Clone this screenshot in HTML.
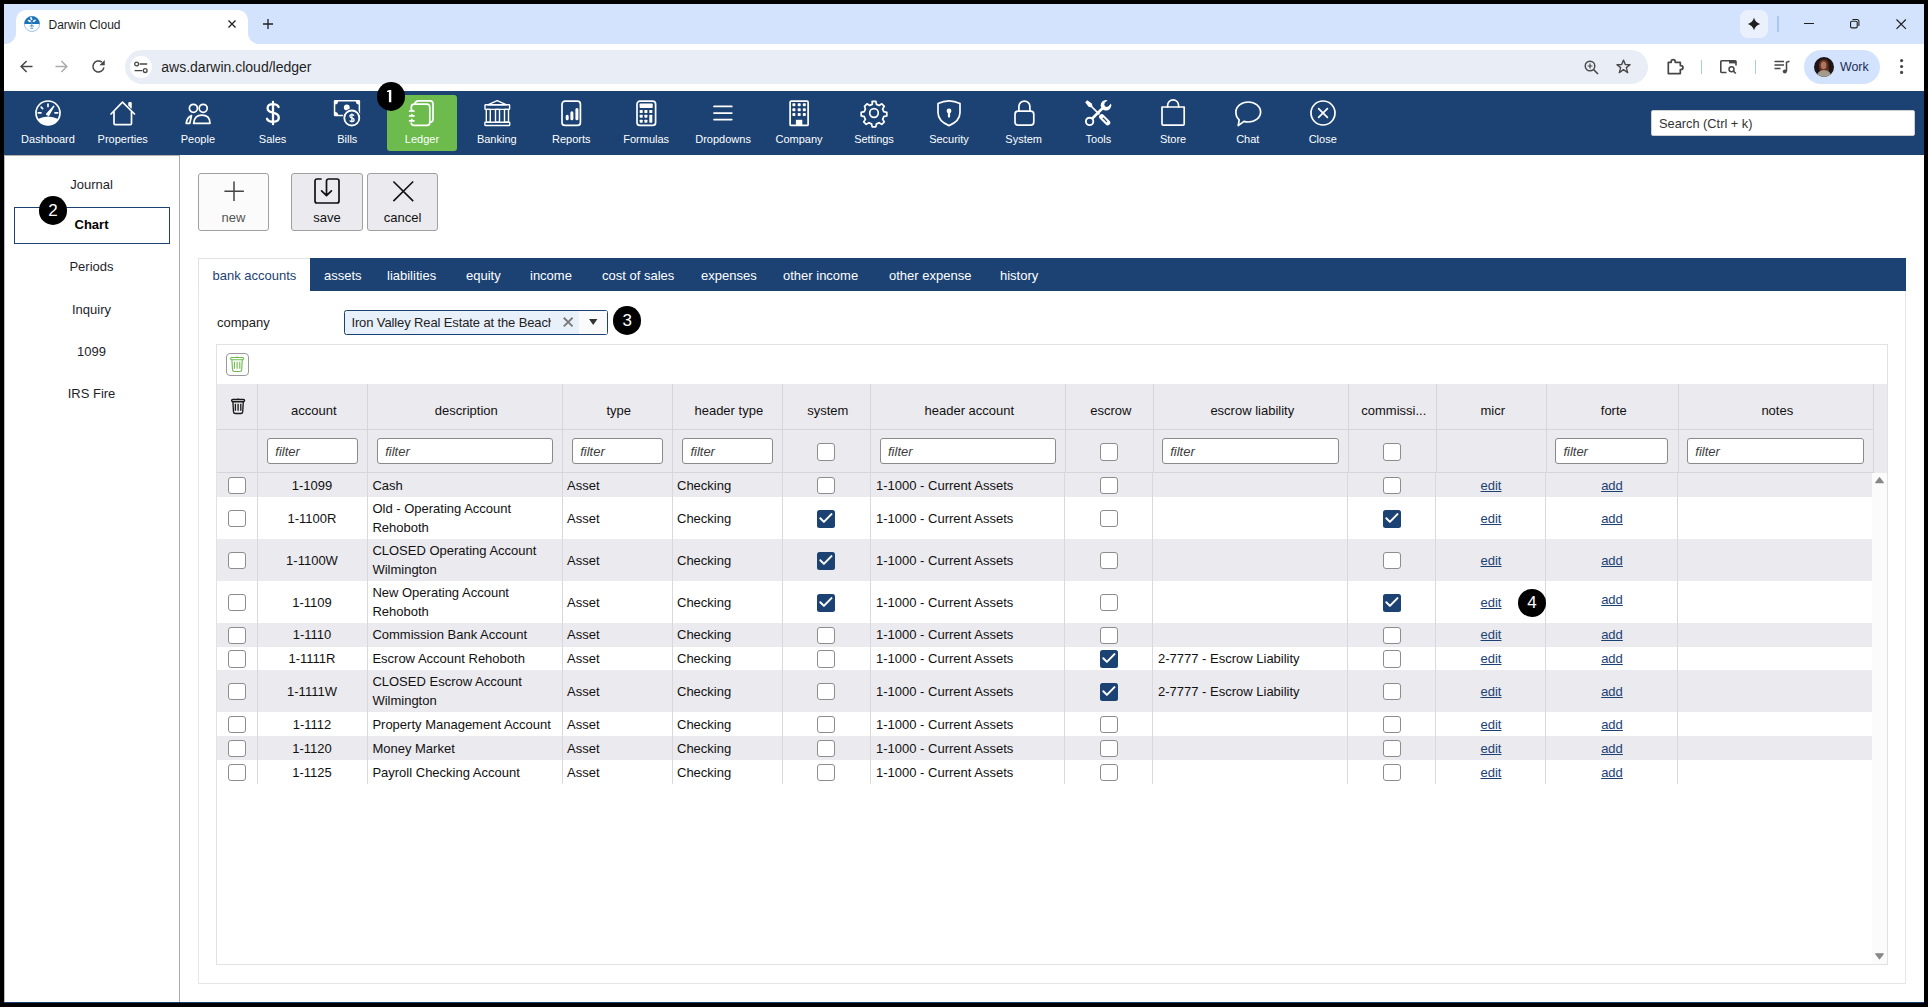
<!DOCTYPE html><html><head><meta charset="utf-8"><style>
*{box-sizing:border-box;margin:0;padding:0}
html,body{width:1928px;height:1007px;overflow:hidden;background:#000;font-family:"Liberation Sans",sans-serif;color:#1f1f1f}
.a{position:absolute}
.t{position:absolute;white-space:nowrap;line-height:1}
svg{overflow:visible}
</style></head><body>
<div class="a" style="left:4px;top:4px;width:1920px;height:999px;background:#fff"></div>

<div class="a" style="left:4px;top:4px;width:1920px;height:40px;background:#d3e3fd"></div>
<div class="a" style="left:16px;top:10px;width:232px;height:34px;background:#fff;border-radius:10px 10px 0 0"></div>
<div class="a" style="left:4px;top:33px;width:12px;height:11px;background:#fff"></div>
<div class="a" style="left:4px;top:33px;width:12px;height:11px;background:#d3e3fd;border-bottom-right-radius:11px"></div>
<div class="a" style="left:248px;top:33px;width:12px;height:11px;background:#fff"></div>
<div class="a" style="left:248px;top:33px;width:12px;height:11px;background:#d3e3fd;border-bottom-left-radius:11px"></div>
<svg class="a" style="left:24px;top:16px;" width="16" height="16" viewBox="0 0 16 16"><circle cx="8" cy="7.9" r="7.6" fill="#fff" stroke="#7fb3db" stroke-width="0.8"/>
<path d="M0.3 7.9 A7.7 7.7 0 0 1 15.7 7.9 Z" fill="#1a73b8"/>
<ellipse cx="7.3" cy="2.6" rx="0.95" ry="1.7" transform="rotate(-25 7.3 2.6)" fill="#fff"/><ellipse cx="5.3" cy="4.9" rx="1.8" ry="0.9" transform="rotate(30 5.3 4.9)" fill="#fff"/><ellipse cx="10.3" cy="4.7" rx="1.8" ry="0.85" transform="rotate(-35 10.3 4.7)" fill="#fff"/>
<path d="M7.8 5.5V7.9" stroke="#6fa9d6" stroke-width="0.8"/>
<path d="M7.8 8V11.5M5.6 10.2Q7.8 9 10 10.2M6.4 12.3H9.2" stroke="#4d95cf" stroke-width="0.9" fill="none"/></svg>
<div class="t" style="left:48.5px;top:19.24px;font-size:12px;color:#1f1f1f;">Darwin Cloud</div>
<svg class="a" style="left:228px;top:20px;" width="8" height="8" viewBox="0 0 8 8"><path d="M0.5 0.5L7.5 7.5M7.5 0.5L0.5 7.5" stroke="#1f1f1f" stroke-width="1.3"/></svg>
<svg class="a" style="left:263px;top:18.6px;" width="10" height="10" viewBox="0 0 10 10"><path d="M5 0V10M0 5H10" stroke="#1f1f1f" stroke-width="1.3"/></svg>
<div class="a" style="left:1740px;top:10px;width:28px;height:28px;background:#eaf1fd;border-radius:8px"></div>
<svg class="a" style="left:1747px;top:17px;" width="14" height="14" viewBox="0 0 14 14"><path d="M7 0.8 Q8.4 5.6 13.2 7 Q8.4 8.4 7 13.2 Q5.6 8.4 0.8 7 Q5.6 5.6 7 0.8Z" fill="#1f1f1f"/></svg>
<div class="a" style="left:1777.3px;top:16px;width:1.6px;height:15.5px;background:#a8c7fa"></div>
<div class="a" style="left:1803.7px;top:23.3px;width:10.3px;height:1.2px;background:#1f1f1f"></div>
<svg class="a" style="left:1849.7px;top:19px;" width="10.2" height="10.2" viewBox="0 0 11 11"><rect x="0.6" y="2.4" width="7.2" height="7.2" rx="1.5" fill="none" stroke="#1f1f1f" stroke-width="1.2"/><path d="M2.6 0.6H7.8A1.8 1.8 0 0 1 9.6 2.4V7.6" fill="none" stroke="#1f1f1f" stroke-width="1.2"/></svg>
<svg class="a" style="left:1895.8px;top:18.9px;" width="10.4" height="10.4" viewBox="0 0 10.4 10.4"><path d="M0.5 0.5L9.9 9.9M9.9 0.5L0.5 9.9" stroke="#1f1f1f" stroke-width="1.2"/></svg>
<div class="a" style="left:4px;top:44px;width:1920px;height:47px;background:#fff"></div>
<svg class="a" style="left:20px;top:60.4px;" width="13" height="13" viewBox="0 0 13 13"><path d="M12.5 6.5H1.2M6.6 1L1.1 6.5L6.6 12" fill="none" stroke="#474747" stroke-width="1.5"/></svg>
<svg class="a" style="left:55px;top:60.4px;" width="13" height="13" viewBox="0 0 13 13"><path d="M0.5 6.5H11.8M6.4 1L11.9 6.5L6.4 12" fill="none" stroke="#ababab" stroke-width="1.5"/></svg>
<svg class="a" style="left:91.7px;top:59.8px;" width="13" height="13" viewBox="0 0 13 13"><path d="M11.9 7.3A5.5 5.5 0 1 1 9.9 2.2" fill="none" stroke="#474747" stroke-width="1.5"/><path d="M7.9 5.1H12.5V0.5Z" fill="#474747" stroke="#474747" stroke-width="0.5" stroke-linejoin="round"/></svg>
<div class="a" style="left:124.5px;top:50px;width:1523.1px;height:34px;background:#e9eef6;border-radius:17px"></div>
<div class="a" style="left:129.6px;top:56px;width:22.0px;height:22px;background:#fff;border-radius:50%"></div>
<svg class="a" style="left:133.6px;top:60.5px;" width="14" height="13" viewBox="0 0 14 13"><circle cx="2.6" cy="3" r="1.9" fill="none" stroke="#474747" stroke-width="1.3"/><path d="M5.6 3H13.2M0.6 9.6H8.2" stroke="#474747" stroke-width="1.4"/><circle cx="11.2" cy="9.6" r="1.9" fill="none" stroke="#474747" stroke-width="1.3"/></svg>
<div class="t" style="left:161.3px;top:59.85px;font-size:14px;color:#1f1f1f;">aws.darwin.cloud/ledger</div>
<svg class="a" style="left:1584px;top:59.5px;" width="15" height="15" viewBox="0 0 15 15"><circle cx="6" cy="6" r="4.8" fill="none" stroke="#474747" stroke-width="1.4"/><path d="M9.5 9.5L14 14" stroke="#474747" stroke-width="1.6"/><path d="M3.6 6H8.4M6 3.6V8.4" stroke="#474747" stroke-width="1.2"/></svg>
<svg class="a" style="left:1616px;top:59px;" width="15" height="15" viewBox="0 0 16 16"><path d="M8 1.2L10 6H15L11 9.2L12.5 14.5L8 11.3L3.5 14.5L5 9.2L1 6H6Z" fill="none" stroke="#474747" stroke-width="1.4" stroke-linejoin="round"/></svg>
<svg class="a" style="left:1666.5px;top:58.5px;" width="17" height="17" viewBox="0 0 17 17"><path d="M1.3 3.3H4.2V2.6A2 2 0 0 1 8.2 2.6V3.3H13.3V6.6H14A2 2 0 0 1 14 10.6H13.3V14.6H1.3Z" fill="none" stroke="#474747" stroke-width="1.7" stroke-linejoin="round"/></svg>
<div class="a" style="left:1700.5px;top:59.5px;width:1.0px;height:14.9px;background:#a8c7fa"></div>
<svg class="a" style="left:1719.5px;top:60px;" width="17" height="14" viewBox="0 0 17 14"><path d="M6.5 12.5H1.8A1 1 0 0 1 0.8 11.5V1.8A1 1 0 0 1 1.8 0.8H15A1 1 0 0 1 16 1.8V5.5" fill="none" stroke="#474747" stroke-width="1.6"/><rect x="9" y="0.8" width="7" height="2.6" fill="#474747"/><circle cx="11.5" cy="9.2" r="2.5" fill="none" stroke="#474747" stroke-width="1.5"/><path d="M13.4 11.1L15.8 13.5" stroke="#474747" stroke-width="1.6"/></svg>
<div class="a" style="left:1754.8px;top:59.5px;width:1.0px;height:14.9px;background:#a8c7fa"></div>
<svg class="a" style="left:1774px;top:60px;" width="16" height="14" viewBox="0 0 16 14"><path d="M0.5 1.5H10M0.5 5H10M0.5 8.5H6.5" stroke="#474747" stroke-width="1.5"/><path d="M12.5 11.2V2.2L15.5 1.2" fill="none" stroke="#474747" stroke-width="1.5"/><circle cx="10.8" cy="11.4" r="2" fill="#474747"/></svg>
<div class="a" style="left:1804px;top:50px;width:75.6px;height:34px;background:#d3e3fd;border-radius:17px"></div>
<svg class="a" style="left:1813.6px;top:56.6px;" width="20" height="20" viewBox="0 0 20 20"><defs><clipPath id="av"><circle cx="10" cy="10" r="10"/></clipPath></defs><g clip-path="url(#av)"><rect width="20" height="20" fill="#1c1716"/><path d="M5 10 Q4.5 2.5 10 2.5 Q14.5 2.5 14.5 8 L15 14 L6 15Z" fill="#6b2e1c"/><ellipse cx="9.6" cy="8.4" rx="2.8" ry="3.8" fill="#a87862"/><path d="M2 20 Q4 13.2 10 13 Q16 13.2 18 20Z" fill="#a39c8c"/></g></svg>
<div class="t" style="left:1840px;top:61.0px;font-size:12.4px;color:#1a2d55;">Work</div>
<svg class="a" style="left:1900.2px;top:59.4px;" width="3.2" height="15" viewBox="0 0 3.2 15"><circle cx="1.6" cy="1.6" r="1.6" fill="#474747"/><circle cx="1.6" cy="7.5" r="1.6" fill="#474747"/><circle cx="1.6" cy="13.4" r="1.6" fill="#474747"/></svg>
<div class="a" style="left:4px;top:91px;width:1920px;height:64px;background:#1b4273"></div>
<div class="a" style="left:387px;top:95px;width:70px;height:56px;background:#6cbb4c;border-radius:3px"></div>
<svg class="a" style="left:35px;top:100px;" width="26" height="26" viewBox="0 0 26 26"><circle cx="13" cy="13" r="12" fill="none" stroke="#fff" stroke-width="1.7" stroke-linecap="round" stroke-linejoin="round" stroke-width="1.9"/><path d="M2.8 19 Q13 14 23.2 19 Q20 25.2 13 25.2 Q6 25.2 2.8 19Z" fill="#fff"/><path d="M13 4V6.5M6.2 7.2L7.6 8.6M3.3 12.8H6M20 12.8H22.7" fill="none" stroke="#fff" stroke-width="1.7" stroke-linecap="round" stroke-linejoin="round" stroke-width="1.6"/><path d="M11.6 14.2L18.8 6.2L13.6 15.4Z" fill="#fff" stroke="#fff" stroke-width="1.4" stroke-linejoin="round"/></svg>
<div class="t" style="left:-2px;top:134.29px;font-size:11px;color:#fff;width:100px;text-align:center;">Dashboard</div>
<svg class="a" style="left:109.7px;top:100px;" width="26" height="26" viewBox="0 0 26 26"><path d="M1 14L12.5 2.2L24.5 14M4 11V23.5A1.2 1.2 0 0 0 5.2 24.7H20.3A1.2 1.2 0 0 0 21.5 23.5V11" fill="none" stroke="#fff" stroke-width="1.7" stroke-linecap="round" stroke-linejoin="round"/><path d="M18.8 6V2.6H21.2V8.4" fill="#fff" stroke="#fff" stroke-width="1"/></svg>
<div class="t" style="left:72.7px;top:134.29px;font-size:11px;color:#fff;width:100px;text-align:center;">Properties</div>
<svg class="a" style="left:184.9px;top:100px;" width="26" height="26" viewBox="0 0 26 26"><circle cx="8.4" cy="8.3" r="4" fill="none" stroke="#fff" stroke-width="1.7" stroke-linecap="round" stroke-linejoin="round"/><circle cx="18.2" cy="8.3" r="4" fill="none" stroke="#fff" stroke-width="1.7" stroke-linecap="round" stroke-linejoin="round"/><path d="M1.2 23.3Q2 17.2 6.5 15.6 L4.8 23.3Z" fill="none" stroke="#fff" stroke-width="1.7" stroke-linecap="round" stroke-linejoin="round"/><path d="M8.6 23.3H25Q25 15.2 16.8 15.2Q9.4 15.2 8.6 23.3Z" fill="none" stroke="#fff" stroke-width="1.7" stroke-linecap="round" stroke-linejoin="round"/></svg>
<div class="t" style="left:147.9px;top:134.29px;font-size:11px;color:#fff;width:100px;text-align:center;">People</div>
<svg class="a" style="left:259.6px;top:100px;" width="26" height="26" viewBox="0 0 26 26"><path d="M18.6 7Q17.4 4.2 13 4.2Q7.6 4.2 7.6 8.2Q7.6 11.4 13 12.6Q18.8 13.9 18.8 17.8Q18.8 21.8 13 21.8Q8.2 21.8 7 18.8M13 2V24.2" fill="none" stroke="#fff" stroke-width="2.3" stroke-linecap="round"/></svg>
<div class="t" style="left:222.6px;top:134.29px;font-size:11px;color:#fff;width:100px;text-align:center;">Sales</div>
<svg class="a" style="left:334.3px;top:100px;" width="26" height="26" viewBox="0 0 26 26"><rect x="-0.2" y="0" width="26.3" height="16.3" rx="1.2" fill="#fff"/><path d="M4.3 1.6H21.6Q22 4.2 24.6 4.6V11.75Q22 12.2 21.6 14.75H4.3Q4 12.2 1.3 11.75V4.6Q4 4.2 4.3 1.6Z" fill="#1b4273"/><circle cx="12.8" cy="7.5" r="2.9" fill="#fff"/><circle cx="17.8" cy="18" r="9.4" fill="#1b4273"/><circle cx="17.8" cy="18" r="7.5" fill="none" stroke="#fff" stroke-width="1.8"/><path d="M20 15.6Q19.4 14.6 17.9 14.6Q15.9 14.6 15.9 16.2Q15.9 17.6 17.9 18Q20.1 18.5 20.1 20.1Q20.1 21.7 17.9 21.7Q16.2 21.7 15.7 20.6M17.9 13.6V22.6" fill="none" stroke="#fff" stroke-width="1.3"/></svg>
<div class="t" style="left:297.3px;top:134.29px;font-size:11px;color:#fff;width:100px;text-align:center;">Bills</div>
<svg class="a" style="left:409px;top:100px;" width="26" height="26" viewBox="0 0 26 26"><path d="M5.8 3.8Q6.4 0.8 9.6 0.8H21Q24 0.8 24 3.8V19.6Q24 22.2 21 22.4" fill="none" stroke="#fff" stroke-width="1.7" stroke-linecap="round" stroke-linejoin="round" stroke-width="1.6"/><path d="M2.3 9V7.2Q2.3 4.2 5.3 4.2H17.8Q20.8 4.2 20.8 7.2V22.4Q20.8 25.4 17.8 25.4H5.3Q2.3 25.4 2.3 23" fill="none" stroke="#fff" stroke-width="1.7" stroke-linecap="round" stroke-linejoin="round" stroke-width="1.6"/><path d="M0.6 11H5M0.6 15.9H5M0.6 20.8H5" fill="none" stroke="#fff" stroke-width="1.7" stroke-linecap="round" stroke-linejoin="round" stroke-width="1.5"/><path d="M2.8 9L1.6 11H4ZM2.8 13.9L1.6 15.9H4ZM2.8 18.8L1.6 20.8H4Z" fill="#fff" stroke="#fff" stroke-width="0.8" stroke-linejoin="round"/></svg>
<div class="t" style="left:372px;top:134.29px;font-size:11px;color:#fff;width:100px;text-align:center;">Ledger</div>
<svg class="a" style="left:483.8px;top:100px;" width="26" height="26" viewBox="0 0 26 26"><g fill="none" stroke="#fff" stroke-width="1.4" stroke-linejoin="round"><path d="M13.2 0.7L22.6 4.8H3.8Z"/><rect x="1" y="4.8" width="24.6" height="4.6" rx="0.6"/><rect x="2.3" y="9.4" width="4" height="12.8"/><rect x="11.5" y="9.4" width="4" height="12.8"/><rect x="20.5" y="9.4" width="4" height="12.8"/><rect x="0.9" y="22.3" width="24.8" height="3.2" rx="0.4"/></g></svg>
<div class="t" style="left:446.8px;top:134.29px;font-size:11px;color:#fff;width:100px;text-align:center;">Banking</div>
<svg class="a" style="left:558.3px;top:100px;" width="26" height="26" viewBox="0 0 26 26"><rect x="4" y="1.2" width="18.4" height="24.2" rx="3" fill="none" stroke="#fff" stroke-width="1.7" stroke-linecap="round" stroke-linejoin="round"/><path d="M9.2 18.8V16.2M13.9 18.8V12.8M18.9 18.8V9.4" stroke="#fff" stroke-width="3" stroke-linecap="round"/></svg>
<div class="t" style="left:521.3px;top:134.29px;font-size:11px;color:#fff;width:100px;text-align:center;">Reports</div>
<svg class="a" style="left:633.2px;top:100px;" width="26" height="26" viewBox="0 0 26 26"><rect x="4" y="1.2" width="18.6" height="24.2" rx="3" fill="none" stroke="#fff" stroke-width="1.7" stroke-linecap="round" stroke-linejoin="round"/><rect x="6.6" y="3.4" width="13.1" height="4.7" rx="0.8" fill="#fff"/><g fill="#fff"><rect x="6.7" y="10" width="3" height="3" rx="0.6"/><rect x="11.4" y="10" width="3" height="3" rx="0.6"/><rect x="16.3" y="10" width="3" height="3" rx="0.6"/><rect x="6.7" y="14.7" width="3" height="3" rx="0.6"/><rect x="11.4" y="14.7" width="3" height="3" rx="0.6"/><rect x="6.7" y="19.7" width="3" height="3" rx="0.6"/><rect x="11.4" y="19.7" width="3" height="3" rx="0.6"/><rect x="16.3" y="14.7" width="3" height="8" rx="0.6"/></g></svg>
<div class="t" style="left:596.2px;top:134.29px;font-size:11px;color:#fff;width:100px;text-align:center;">Formulas</div>
<svg class="a" style="left:710.1px;top:100px;" width="26" height="26" viewBox="0 0 26 26"><path d="M4 6.4H21.8M4 13.1H21.8M4 19.6H21.8" fill="none" stroke="#fff" stroke-width="1.7" stroke-linecap="round" stroke-linejoin="round"/></svg>
<div class="t" style="left:673.1px;top:134.29px;font-size:11px;color:#fff;width:100px;text-align:center;">Dropdowns</div>
<svg class="a" style="left:786px;top:100px;" width="26" height="26" viewBox="0 0 26 26"><rect x="4.1" y="1.2" width="18" height="24.2" rx="1" fill="none" stroke="#fff" stroke-width="1.7" stroke-linecap="round" stroke-linejoin="round"/><g fill="#fff"><rect x="6.4" y="3.2" width="3" height="3" rx="0.8"/><rect x="11.7" y="3.2" width="3" height="3" rx="0.8"/><rect x="16.8" y="3.2" width="3" height="3" rx="0.8"/><rect x="6.4" y="8.2" width="3" height="3" rx="0.8"/><rect x="11.7" y="8.2" width="3" height="3" rx="0.8"/><rect x="16.8" y="8.2" width="3" height="3" rx="0.8"/><rect x="6.4" y="13.1" width="3" height="3" rx="0.8"/><rect x="11.7" y="13.1" width="3" height="3" rx="0.8"/><rect x="16.8" y="13.1" width="3" height="3" rx="0.8"/><rect x="9.9" y="19.8" width="6.4" height="5.8"/></g></svg>
<div class="t" style="left:749px;top:134.29px;font-size:11px;color:#fff;width:100px;text-align:center;">Company</div>
<svg class="a" style="left:861px;top:100px;" width="26" height="26" viewBox="0 0 26 26"><path d="M11.2 1.3h3.6l.7 3.1a9 9 0 0 1 2.6 1.1l2.7-1.7 2.5 2.5-1.7 2.7a9 9 0 0 1 1.1 2.6l3.1.7v3.6l-3.1.7a9 9 0 0 1-1.1 2.6l1.7 2.7-2.5 2.5-2.7-1.7a9 9 0 0 1-2.6 1.1l-.7 3.1h-3.6l-.7-3.1a9 9 0 0 1-2.6-1.1l-2.7 1.7-2.5-2.5 1.7-2.7a9 9 0 0 1-1.1-2.6l-3.1-.7v-3.6l3.1-.7a9 9 0 0 1 1.1-2.6L3.5 6.3 6 3.8l2.7 1.7a9 9 0 0 1 2.6-1.1z" fill="none" stroke="#fff" stroke-width="1.7" stroke-linecap="round" stroke-linejoin="round" stroke-width="1.5"/><circle cx="13" cy="13" r="4.3" fill="none" stroke="#fff" stroke-width="1.7" stroke-linecap="round" stroke-linejoin="round"/></svg>
<div class="t" style="left:824px;top:134.29px;font-size:11px;color:#fff;width:100px;text-align:center;">Settings</div>
<svg class="a" style="left:936px;top:100px;" width="26" height="26" viewBox="0 0 26 26"><path d="M13 0.9Q18.5 0.9 24 3.6V12.5Q24 21 13 25.6Q2 21 2 12.5V3.6Q7.5 0.9 13 0.9Z" fill="none" stroke="#fff" stroke-width="1.7" stroke-linecap="round" stroke-linejoin="round"/><circle cx="13" cy="10.9" r="2.4" fill="#fff"/><path d="M13 11.5V16.6" stroke="#fff" stroke-width="2.2" stroke-linecap="round"/></svg>
<div class="t" style="left:899px;top:134.29px;font-size:11px;color:#fff;width:100px;text-align:center;">Security</div>
<svg class="a" style="left:1010.7px;top:100px;" width="26" height="26" viewBox="0 0 26 26"><rect x="4" y="11.2" width="18.8" height="14" rx="3.2" fill="none" stroke="#fff" stroke-width="1.7" stroke-linecap="round" stroke-linejoin="round"/><path d="M7.9 11.2V6.6A5.5 5.5 0 0 1 18.9 6.6V11.2" fill="none" stroke="#fff" stroke-width="1.7" stroke-linecap="round" stroke-linejoin="round"/></svg>
<div class="t" style="left:973.7px;top:134.29px;font-size:11px;color:#fff;width:100px;text-align:center;">System</div>
<svg class="a" style="left:1085.4px;top:100px;" width="26" height="26" viewBox="0 0 26 26"><defs><mask id="jawm"><rect x="-2" y="-2" width="30" height="30" fill="#fff"/><circle cx="21.7" cy="4.5" r="2.4" fill="#000"/><path d="M20 2.8L23.4 6.2L28.5 1.1L25.1 -2.3Z" fill="#000"/></mask></defs><g fill="#fff"><path d="M0.2 2.2L2.2 0.2L6.8 3.6L7.6 6.4L15 13.8L13.8 15L6.4 7.6L3.6 6.8Z"/><path d="M6.4 17.6L17.4 6.6L19.2 8.4L8.2 19.4Z"/><circle cx="21" cy="5.2" r="5.3" mask="url(#jawm)"/></g><circle cx="4.6" cy="21.4" r="3.7" fill="#1b4273" stroke="#fff" stroke-width="1.9"/><path d="M16.8 16.8L22.6 22.6" stroke="#fff" stroke-width="5.4" stroke-linecap="round"/><path d="M18.2 18.2L21.6 21.6" stroke="#1b4273" stroke-width="1.2" stroke-linecap="round"/></svg>
<div class="t" style="left:1048.4px;top:134.29px;font-size:11px;color:#fff;width:100px;text-align:center;">Tools</div>
<svg class="a" style="left:1160.1px;top:100px;" width="26" height="26" viewBox="0 0 26 26"><path d="M2 7H24.2V24A1.2 1.2 0 0 1 23 25.2H3.2A1.2 1.2 0 0 1 2 24Z" fill="none" stroke="#fff" stroke-width="1.7" stroke-linecap="round" stroke-linejoin="round"/><path d="M7.6 7V5.4A5.4 5.4 0 0 1 18.6 5.4V7" fill="none" stroke="#fff" stroke-width="1.7" stroke-linecap="round" stroke-linejoin="round"/></svg>
<div class="t" style="left:1123.1px;top:134.29px;font-size:11px;color:#fff;width:100px;text-align:center;">Store</div>
<svg class="a" style="left:1234.8px;top:100px;" width="26" height="26" viewBox="0 0 26 26"><path d="M13.3 2C20 2 25.6 6.2 25.6 12C25.6 17.8 20 22 13.3 22C11.8 22 10.3 21.8 9 21.4L3.2 25.6L4.2 19.8C2 18 0.9 15.2 0.9 12C0.9 6.2 6.5 2 13.3 2Z" fill="none" stroke="#fff" stroke-width="1.7" stroke-linecap="round" stroke-linejoin="round" stroke-width="1.6"/></svg>
<div class="t" style="left:1197.8px;top:134.29px;font-size:11px;color:#fff;width:100px;text-align:center;">Chat</div>
<svg class="a" style="left:1309.7px;top:100px;" width="26" height="26" viewBox="0 0 26 26"><circle cx="13" cy="13" r="12" fill="none" stroke="#fff" stroke-width="1.7" stroke-linecap="round" stroke-linejoin="round" stroke-width="1.6"/><path d="M8.6 8.6L17.4 17.4M17.4 8.6L8.6 17.4" fill="none" stroke="#fff" stroke-width="1.7" stroke-linecap="round" stroke-linejoin="round" stroke-width="1.6"/></svg>
<div class="t" style="left:1272.7px;top:134.29px;font-size:11px;color:#fff;width:100px;text-align:center;">Close</div>
<div class="a" style="left:1651px;top:110px;width:264px;height:26px;background:#fff;border:1px solid #cfcfcf;border-radius:2px"></div>
<div class="t" style="left:1659px;top:117.86px;font-size:12.8px;color:#333;">Search (Ctrl + k)</div>
<div class="a" style="left:4px;top:155px;width:175px;height:847px;background:#fff;border-top:1px solid #b3b0ad"></div>
<div class="a" style="left:179px;top:155px;width:1px;height:847px;background:#a9a9a9"></div>
<div class="a" style="left:4px;top:155px;width:1px;height:847px;background:#bdbdbd"></div>
<div class="t" style="left:4px;top:177.79px;font-size:13px;color:#1e1e2a;width:175px;text-align:center;">Journal</div>
<div class="t" style="left:4px;top:260.49px;font-size:13px;color:#1e1e2a;width:175px;text-align:center;">Periods</div>
<div class="t" style="left:4px;top:302.59px;font-size:13px;color:#1e1e2a;width:175px;text-align:center;">Inquiry</div>
<div class="t" style="left:4px;top:344.69px;font-size:13px;color:#1e1e2a;width:175px;text-align:center;">1099</div>
<div class="t" style="left:4px;top:386.89px;font-size:13px;color:#1e1e2a;width:175px;text-align:center;">IRS Fire</div>
<div class="a" style="left:14px;top:207px;width:156px;height:37px;border:1px solid #1b4273"></div>
<div class="t" style="left:4px;top:218.49px;font-size:13px;color:#000;width:175px;text-align:center;font-weight:bold;">Chart</div>
<div class="a" style="left:198.4px;top:173px;width:70.2px;height:57.5px;background:#fbfbfb;border:1px solid #a0a0a0;border-radius:3px"></div>
<svg class="a" style="left:220.5px;top:178px;" width="26" height="26" viewBox="0 0 26 26"><path d="M13 3.5V22.9M3.4 13.2H22.9" stroke="#444" stroke-width="1.5"/></svg>
<div class="t" style="left:198.4px;top:210.89px;font-size:13px;color:#555;width:70.2px;text-align:center;">new</div>
<div class="a" style="left:291.4px;top:173px;width:71.2px;height:57.5px;background:#ebebef;border:1px solid #a0a0a0;border-radius:3px"></div>
<svg class="a" style="left:314.0px;top:178px;" width="26" height="26" viewBox="0 0 26 26"><path d="M7 1H3A2 2 0 0 0 1 3V23A2 2 0 0 0 3 25H23A2 2 0 0 0 25 23V3A2 2 0 0 0 23 1H14.5A2 2 0 0 0 12.5 3V17.5M7.6 12.8L12.5 17.7L17.4 12.8" fill="none" stroke="#111" stroke-width="1.7" stroke-linejoin="round" stroke-linecap="round"/></svg>
<div class="t" style="left:291.4px;top:210.89px;font-size:13px;color:#111;width:71.2px;text-align:center;">save</div>
<div class="a" style="left:367.3px;top:173px;width:70.4px;height:57.5px;background:#ebebef;border:1px solid #a0a0a0;border-radius:3px"></div>
<svg class="a" style="left:389.5px;top:178px;" width="26" height="26" viewBox="0 0 26 26"><path d="M3.4 3.5L23.2 23.1M23.2 3.5L3.4 23.1" stroke="#111" stroke-width="1.6"/></svg>
<div class="t" style="left:367.3px;top:210.89px;font-size:13px;color:#111;width:70.4px;text-align:center;">cancel</div>
<div class="a" style="left:198px;top:258px;width:1708px;height:726px;border:1px solid #e6e6e6;background:#fff"></div>
<div class="a" style="left:310px;top:258px;width:1596px;height:33px;background:#1b4273"></div>
<div class="a" style="left:198px;top:258px;width:112px;height:33px;background:#fff;border-top:1px solid #e2e2e2;border-left:1px solid #e2e2e2"></div>
<div class="t" style="left:212.5px;top:268.79px;font-size:13px;color:#1b4273;">bank accounts</div>
<div class="t" style="left:324px;top:268.79px;font-size:13px;color:#fff;">assets</div>
<div class="t" style="left:387px;top:268.79px;font-size:13px;color:#fff;">liabilities</div>
<div class="t" style="left:466px;top:268.79px;font-size:13px;color:#fff;">equity</div>
<div class="t" style="left:530px;top:268.79px;font-size:13px;color:#fff;">income</div>
<div class="t" style="left:602px;top:268.79px;font-size:13px;color:#fff;">cost of sales</div>
<div class="t" style="left:701px;top:268.79px;font-size:13px;color:#fff;">expenses</div>
<div class="t" style="left:783px;top:268.79px;font-size:13px;color:#fff;">other income</div>
<div class="t" style="left:889px;top:268.79px;font-size:13px;color:#fff;">other expense</div>
<div class="t" style="left:1000px;top:268.79px;font-size:13px;color:#fff;">history</div>
<div class="t" style="left:217px;top:315.99px;font-size:13px;color:#222;">company</div>
<div class="a" style="left:344px;top:310px;width:264px;height:25px;border:1px solid #1b4273;border-radius:2.5px;background:#e8f0fa"></div>
<div class="a" style="left:579px;top:311px;width:28px;height:23px;background:#fafafa"></div>
<div class="a" style="left:351.4px;top:314px;width:199.5px;height:18px;overflow:hidden"><div class="t" style="left:0;top:2.49px;font-size:13px;letter-spacing:-0.12px;color:#222">Iron Valley Real Estate at the Beach</div></div>
<svg class="a" style="left:563.2px;top:317.1px;" width="10.4" height="10.2" viewBox="0 0 10.4 10.2"><path d="M0.8 0.8L9.6 9.4M9.6 0.8L0.8 9.4" stroke="#7a7a7a" stroke-width="1.9"/></svg>
<svg class="a" style="left:589.1px;top:319.2px;" width="8.4" height="6" viewBox="0 0 8.4 6"><path d="M0 0H8.4L4.2 6Z" fill="#333"/></svg>
<div class="a" style="left:216px;top:344px;width:1672px;height:621px;border:1px solid #e2e2e2;background:#fff"></div>
<div class="a" style="left:226px;top:353px;width:23px;height:23px;border:1px solid #9a9a9a;border-radius:4px;background:#fff"></div>
<svg class="a" style="left:229px;top:355px;" width="16" height="18" viewBox="0 0 16 18"><g fill="none" stroke="#6cbb4c" stroke-width="1.1" stroke-linejoin="round"><rect x="1.6" y="2.5" width="13" height="2.2" rx="1.1"/><path d="M2.9 4.8L3.5 14.9Q3.7 16.5 5.3 16.5H10.9Q12.5 16.5 12.7 14.9L13.3 4.8M5.4 6.7V13.8M8.1 6.7V13.8M10.8 6.7V13.8"/></g><path d="M6.3 2.5Q8.1 0.6 9.9 2.5Z" fill="#6cbb4c"/></svg>
<div class="a" style="left:217px;top:384px;width:1670px;height:89px;background:#ebeaef"></div>
<div class="a" style="left:217px;top:429px;width:1656px;height:1px;background:#d5d5db"></div>
<div class="a" style="left:217px;top:472px;width:1656px;height:1px;background:#d5d5db"></div>
<div class="a" style="left:257px;top:384px;width:1px;height:89px;background:#d5d5db"></div>
<div class="a" style="left:367px;top:384px;width:1px;height:89px;background:#d5d5db"></div>
<div class="a" style="left:562px;top:384px;width:1px;height:89px;background:#d5d5db"></div>
<div class="a" style="left:672px;top:384px;width:1px;height:89px;background:#d5d5db"></div>
<div class="a" style="left:782px;top:384px;width:1px;height:89px;background:#d5d5db"></div>
<div class="a" style="left:870px;top:384px;width:1px;height:89px;background:#d5d5db"></div>
<div class="a" style="left:1065px;top:384px;width:1px;height:89px;background:#d5d5db"></div>
<div class="a" style="left:1153px;top:384px;width:1px;height:89px;background:#d5d5db"></div>
<div class="a" style="left:1348px;top:384px;width:1px;height:89px;background:#d5d5db"></div>
<div class="a" style="left:1436px;top:384px;width:1px;height:89px;background:#d5d5db"></div>
<div class="a" style="left:1546px;top:384px;width:1px;height:89px;background:#d5d5db"></div>
<div class="a" style="left:1678px;top:384px;width:1px;height:89px;background:#d5d5db"></div>
<div class="a" style="left:1873px;top:384px;width:1px;height:89px;background:#d5d5db"></div>
<div class="t" style="left:258.8px;top:403.99px;font-size:13px;color:#111;width:110px;text-align:center;">account</div>
<div class="t" style="left:368.8px;top:403.99px;font-size:13px;color:#111;width:195px;text-align:center;">description</div>
<div class="t" style="left:563.8px;top:403.99px;font-size:13px;color:#111;width:110px;text-align:center;">type</div>
<div class="t" style="left:673.8px;top:403.99px;font-size:13px;color:#111;width:110px;text-align:center;">header type</div>
<div class="t" style="left:783.8px;top:403.99px;font-size:13px;color:#111;width:88px;text-align:center;">system</div>
<div class="t" style="left:871.8px;top:403.99px;font-size:13px;color:#111;width:195px;text-align:center;">header account</div>
<div class="t" style="left:1066.8px;top:403.99px;font-size:13px;color:#111;width:88px;text-align:center;">escrow</div>
<div class="t" style="left:1154.8px;top:403.99px;font-size:13px;color:#111;width:195px;text-align:center;">escrow liability</div>
<div class="t" style="left:1349.8px;top:403.99px;font-size:13px;color:#111;width:88px;text-align:center;">commissi...</div>
<div class="t" style="left:1437.8px;top:403.99px;font-size:13px;color:#111;width:110px;text-align:center;">micr</div>
<div class="t" style="left:1547.8px;top:403.99px;font-size:13px;color:#111;width:132px;text-align:center;">forte</div>
<div class="t" style="left:1679.8px;top:403.99px;font-size:13px;color:#111;width:195px;text-align:center;">notes</div>
<svg class="a" style="left:230.1px;top:396.6px;" width="16" height="18" viewBox="0 0 16 18"><g fill="none" stroke="#1a1a1a" stroke-width="1.35" stroke-linejoin="round"><rect x="1.6" y="2.5" width="13" height="2.2" rx="1.1"/><path d="M2.9 4.8L3.5 14.9Q3.7 16.5 5.3 16.5H10.9Q12.5 16.5 12.7 14.9L13.3 4.8M5.4 6.7V13.8M8.1 6.7V13.8M10.8 6.7V13.8"/></g><path d="M6.3 2.5Q8.1 0.6 9.9 2.5Z" fill="#1a1a1a"/></svg>
<div class="a" style="left:267.3px;top:438.3px;width:90.4px;height:25.6px;border:1px solid #8a8a8a;border-radius:3px;background:#fff"></div>
<div class="t" style="left:275.3px;top:444.99px;font-size:13px;color:#3c3c3c;font-style:italic;">filter</div>
<div class="a" style="left:377.2px;top:438.3px;width:175.5px;height:25.6px;border:1px solid #8a8a8a;border-radius:3px;background:#fff"></div>
<div class="t" style="left:385.2px;top:444.99px;font-size:13px;color:#3c3c3c;font-style:italic;">filter</div>
<div class="a" style="left:572.2px;top:438.3px;width:90.4px;height:25.6px;border:1px solid #8a8a8a;border-radius:3px;background:#fff"></div>
<div class="t" style="left:580.2px;top:444.99px;font-size:13px;color:#3c3c3c;font-style:italic;">filter</div>
<div class="a" style="left:682.4px;top:438.3px;width:90.2px;height:25.6px;border:1px solid #8a8a8a;border-radius:3px;background:#fff"></div>
<div class="t" style="left:690.4px;top:444.99px;font-size:13px;color:#3c3c3c;font-style:italic;">filter</div>
<div class="a" style="left:880px;top:438.3px;width:176px;height:25.6px;border:1px solid #8a8a8a;border-radius:3px;background:#fff"></div>
<div class="t" style="left:888px;top:444.99px;font-size:13px;color:#3c3c3c;font-style:italic;">filter</div>
<div class="a" style="left:1162.2px;top:438.3px;width:176.6px;height:25.6px;border:1px solid #8a8a8a;border-radius:3px;background:#fff"></div>
<div class="t" style="left:1170.2px;top:444.99px;font-size:13px;color:#3c3c3c;font-style:italic;">filter</div>
<div class="a" style="left:1555.4px;top:438.3px;width:113.1px;height:25.6px;border:1px solid #8a8a8a;border-radius:3px;background:#fff"></div>
<div class="t" style="left:1563.4px;top:444.99px;font-size:13px;color:#3c3c3c;font-style:italic;">filter</div>
<div class="a" style="left:1687.3px;top:438.3px;width:176.4px;height:25.6px;border:1px solid #8a8a8a;border-radius:3px;background:#fff"></div>
<div class="t" style="left:1695.3px;top:444.99px;font-size:13px;color:#3c3c3c;font-style:italic;">filter</div>
<div class="a" style="left:817.2px;top:443.2px;width:17.5px;height:17.5px;border:1px solid #8d8d8d;border-radius:3px;background:#fff"></div>
<div class="a" style="left:1100px;top:443.2px;width:17.5px;height:17.5px;border:1px solid #8d8d8d;border-radius:3px;background:#fff"></div>
<div class="a" style="left:1383px;top:443.2px;width:17.5px;height:17.5px;border:1px solid #8d8d8d;border-radius:3px;background:#fff"></div>
<div class="a" style="left:217px;top:473px;width:1655px;height:24px;background:#ebeaef"></div>
<div class="a" style="left:257px;top:473px;width:1px;height:24px;background:#d8d8de"></div>
<div class="a" style="left:367px;top:473px;width:1px;height:24px;background:#d8d8de"></div>
<div class="a" style="left:562px;top:473px;width:1px;height:24px;background:#d8d8de"></div>
<div class="a" style="left:672px;top:473px;width:1px;height:24px;background:#d8d8de"></div>
<div class="a" style="left:782px;top:473px;width:1px;height:24px;background:#d8d8de"></div>
<div class="a" style="left:870px;top:473px;width:1px;height:24px;background:#d8d8de"></div>
<div class="a" style="left:1064px;top:473px;width:1px;height:24px;background:#d8d8de"></div>
<div class="a" style="left:1152px;top:473px;width:1px;height:24px;background:#d8d8de"></div>
<div class="a" style="left:1347px;top:473px;width:1px;height:24px;background:#d8d8de"></div>
<div class="a" style="left:1435px;top:473px;width:1px;height:24px;background:#d8d8de"></div>
<div class="a" style="left:1545px;top:473px;width:1px;height:24px;background:#d8d8de"></div>
<div class="a" style="left:1677px;top:473px;width:1px;height:24px;background:#d8d8de"></div>
<div class="a" style="left:228.2px;top:476.7px;width:17.5px;height:17.5px;border:1px solid #8d8d8d;border-radius:3px;background:#fff"></div>
<div class="t" style="left:257px;top:478.79px;font-size:13px;color:#111;width:110px;text-align:center;">1-1099</div>
<div class="t" style="left:372.4px;top:478.79px;font-size:13px;color:#111;">Cash</div>
<div class="t" style="left:567px;top:478.79px;font-size:13px;color:#111;">Asset</div>
<div class="t" style="left:677px;top:478.79px;font-size:13px;color:#111;">Checking</div>
<div class="a" style="left:817.2px;top:476.7px;width:17.5px;height:17.5px;border:1px solid #8d8d8d;border-radius:3px;background:#fff"></div>
<div class="t" style="left:876px;top:478.79px;font-size:13px;color:#111;">1-1000 - Current Assets</div>
<div class="a" style="left:1100px;top:476.7px;width:17.5px;height:17.5px;border:1px solid #8d8d8d;border-radius:3px;background:#fff"></div>
<div class="a" style="left:1383px;top:476.7px;width:17.5px;height:17.5px;border:1px solid #8d8d8d;border-radius:3px;background:#fff"></div>
<div class="t" style="left:1436px;top:478.79px;font-size:13px;color:#1b4273;width:110px;text-align:center;text-decoration:underline;">edit</div>
<div class="t" style="left:1546px;top:478.79px;font-size:13px;color:#1b4273;width:132px;text-align:center;text-decoration:underline;">add</div>
<div class="a" style="left:217px;top:497px;width:1655px;height:42px;background:#fff"></div>
<div class="a" style="left:257px;top:497px;width:1px;height:42px;background:#d8d8de"></div>
<div class="a" style="left:367px;top:497px;width:1px;height:42px;background:#d8d8de"></div>
<div class="a" style="left:562px;top:497px;width:1px;height:42px;background:#d8d8de"></div>
<div class="a" style="left:672px;top:497px;width:1px;height:42px;background:#d8d8de"></div>
<div class="a" style="left:782px;top:497px;width:1px;height:42px;background:#d8d8de"></div>
<div class="a" style="left:870px;top:497px;width:1px;height:42px;background:#d8d8de"></div>
<div class="a" style="left:1064px;top:497px;width:1px;height:42px;background:#d8d8de"></div>
<div class="a" style="left:1152px;top:497px;width:1px;height:42px;background:#d8d8de"></div>
<div class="a" style="left:1347px;top:497px;width:1px;height:42px;background:#d8d8de"></div>
<div class="a" style="left:1435px;top:497px;width:1px;height:42px;background:#d8d8de"></div>
<div class="a" style="left:1545px;top:497px;width:1px;height:42px;background:#d8d8de"></div>
<div class="a" style="left:1677px;top:497px;width:1px;height:42px;background:#d8d8de"></div>
<div class="a" style="left:228.2px;top:509.7px;width:17.5px;height:17.5px;border:1px solid #8d8d8d;border-radius:3px;background:#fff"></div>
<div class="t" style="left:257px;top:511.79px;font-size:13px;color:#111;width:110px;text-align:center;">1-1100R</div>
<div class="t" style="left:372.4px;top:502.29px;font-size:13px;color:#111;">Old - Operating Account</div>
<div class="t" style="left:372.4px;top:521.29px;font-size:13px;color:#111;">Rehoboth</div>
<div class="t" style="left:567px;top:511.79px;font-size:13px;color:#111;">Asset</div>
<div class="t" style="left:677px;top:511.79px;font-size:13px;color:#111;">Checking</div>
<div class="a" style="left:817.0px;top:509.5px;width:18.0px;height:18.0px;background:#1b4273;border-radius:2.5px"></div>
<svg class="a" style="left:817.0px;top:509.5px;" width="18" height="18" viewBox="0 0 18 18"><path d="M3.3 8.3L6.9 11.9L14.5 4.1" fill="none" stroke="#fff" stroke-width="2" stroke-linecap="round" stroke-linejoin="round"/></svg>
<div class="t" style="left:876px;top:511.79px;font-size:13px;color:#111;">1-1000 - Current Assets</div>
<div class="a" style="left:1100px;top:509.7px;width:17.5px;height:17.5px;border:1px solid #8d8d8d;border-radius:3px;background:#fff"></div>
<div class="a" style="left:1382.8px;top:509.5px;width:18.0px;height:18.0px;background:#1b4273;border-radius:2.5px"></div>
<svg class="a" style="left:1382.8px;top:509.5px;" width="18" height="18" viewBox="0 0 18 18"><path d="M3.3 8.3L6.9 11.9L14.5 4.1" fill="none" stroke="#fff" stroke-width="2" stroke-linecap="round" stroke-linejoin="round"/></svg>
<div class="t" style="left:1436px;top:511.79px;font-size:13px;color:#1b4273;width:110px;text-align:center;text-decoration:underline;">edit</div>
<div class="t" style="left:1546px;top:511.79px;font-size:13px;color:#1b4273;width:132px;text-align:center;text-decoration:underline;">add</div>
<div class="a" style="left:217px;top:539px;width:1655px;height:42px;background:#ebeaef"></div>
<div class="a" style="left:257px;top:539px;width:1px;height:42px;background:#d8d8de"></div>
<div class="a" style="left:367px;top:539px;width:1px;height:42px;background:#d8d8de"></div>
<div class="a" style="left:562px;top:539px;width:1px;height:42px;background:#d8d8de"></div>
<div class="a" style="left:672px;top:539px;width:1px;height:42px;background:#d8d8de"></div>
<div class="a" style="left:782px;top:539px;width:1px;height:42px;background:#d8d8de"></div>
<div class="a" style="left:870px;top:539px;width:1px;height:42px;background:#d8d8de"></div>
<div class="a" style="left:1064px;top:539px;width:1px;height:42px;background:#d8d8de"></div>
<div class="a" style="left:1152px;top:539px;width:1px;height:42px;background:#d8d8de"></div>
<div class="a" style="left:1347px;top:539px;width:1px;height:42px;background:#d8d8de"></div>
<div class="a" style="left:1435px;top:539px;width:1px;height:42px;background:#d8d8de"></div>
<div class="a" style="left:1545px;top:539px;width:1px;height:42px;background:#d8d8de"></div>
<div class="a" style="left:1677px;top:539px;width:1px;height:42px;background:#d8d8de"></div>
<div class="a" style="left:228.2px;top:551.7px;width:17.5px;height:17.5px;border:1px solid #8d8d8d;border-radius:3px;background:#fff"></div>
<div class="t" style="left:257px;top:553.79px;font-size:13px;color:#111;width:110px;text-align:center;">1-1100W</div>
<div class="t" style="left:372.4px;top:544.29px;font-size:13px;color:#111;">CLOSED Operating Account</div>
<div class="t" style="left:372.4px;top:563.29px;font-size:13px;color:#111;">Wilmington</div>
<div class="t" style="left:567px;top:553.79px;font-size:13px;color:#111;">Asset</div>
<div class="t" style="left:677px;top:553.79px;font-size:13px;color:#111;">Checking</div>
<div class="a" style="left:817.0px;top:551.5px;width:18.0px;height:18.0px;background:#1b4273;border-radius:2.5px"></div>
<svg class="a" style="left:817.0px;top:551.5px;" width="18" height="18" viewBox="0 0 18 18"><path d="M3.3 8.3L6.9 11.9L14.5 4.1" fill="none" stroke="#fff" stroke-width="2" stroke-linecap="round" stroke-linejoin="round"/></svg>
<div class="t" style="left:876px;top:553.79px;font-size:13px;color:#111;">1-1000 - Current Assets</div>
<div class="a" style="left:1100px;top:551.7px;width:17.5px;height:17.5px;border:1px solid #8d8d8d;border-radius:3px;background:#fff"></div>
<div class="a" style="left:1383px;top:551.7px;width:17.5px;height:17.5px;border:1px solid #8d8d8d;border-radius:3px;background:#fff"></div>
<div class="t" style="left:1436px;top:553.79px;font-size:13px;color:#1b4273;width:110px;text-align:center;text-decoration:underline;">edit</div>
<div class="t" style="left:1546px;top:553.79px;font-size:13px;color:#1b4273;width:132px;text-align:center;text-decoration:underline;">add</div>
<div class="a" style="left:217px;top:581px;width:1655px;height:42px;background:#fff"></div>
<div class="a" style="left:257px;top:581px;width:1px;height:42px;background:#d8d8de"></div>
<div class="a" style="left:367px;top:581px;width:1px;height:42px;background:#d8d8de"></div>
<div class="a" style="left:562px;top:581px;width:1px;height:42px;background:#d8d8de"></div>
<div class="a" style="left:672px;top:581px;width:1px;height:42px;background:#d8d8de"></div>
<div class="a" style="left:782px;top:581px;width:1px;height:42px;background:#d8d8de"></div>
<div class="a" style="left:870px;top:581px;width:1px;height:42px;background:#d8d8de"></div>
<div class="a" style="left:1064px;top:581px;width:1px;height:42px;background:#d8d8de"></div>
<div class="a" style="left:1152px;top:581px;width:1px;height:42px;background:#d8d8de"></div>
<div class="a" style="left:1347px;top:581px;width:1px;height:42px;background:#d8d8de"></div>
<div class="a" style="left:1435px;top:581px;width:1px;height:42px;background:#d8d8de"></div>
<div class="a" style="left:1545px;top:581px;width:1px;height:42px;background:#d8d8de"></div>
<div class="a" style="left:1677px;top:581px;width:1px;height:42px;background:#d8d8de"></div>
<div class="a" style="left:228.2px;top:593.7px;width:17.5px;height:17.5px;border:1px solid #8d8d8d;border-radius:3px;background:#fff"></div>
<div class="t" style="left:257px;top:595.79px;font-size:13px;color:#111;width:110px;text-align:center;">1-1109</div>
<div class="t" style="left:372.4px;top:586.29px;font-size:13px;color:#111;">New Operating Account</div>
<div class="t" style="left:372.4px;top:605.29px;font-size:13px;color:#111;">Rehoboth</div>
<div class="t" style="left:567px;top:595.79px;font-size:13px;color:#111;">Asset</div>
<div class="t" style="left:677px;top:595.79px;font-size:13px;color:#111;">Checking</div>
<div class="a" style="left:817.0px;top:593.5px;width:18.0px;height:18.0px;background:#1b4273;border-radius:2.5px"></div>
<svg class="a" style="left:817.0px;top:593.5px;" width="18" height="18" viewBox="0 0 18 18"><path d="M3.3 8.3L6.9 11.9L14.5 4.1" fill="none" stroke="#fff" stroke-width="2" stroke-linecap="round" stroke-linejoin="round"/></svg>
<div class="t" style="left:876px;top:595.79px;font-size:13px;color:#111;">1-1000 - Current Assets</div>
<div class="a" style="left:1100px;top:593.7px;width:17.5px;height:17.5px;border:1px solid #8d8d8d;border-radius:3px;background:#fff"></div>
<div class="a" style="left:1382.8px;top:593.5px;width:18.0px;height:18.0px;background:#1b4273;border-radius:2.5px"></div>
<svg class="a" style="left:1382.8px;top:593.5px;" width="18" height="18" viewBox="0 0 18 18"><path d="M3.3 8.3L6.9 11.9L14.5 4.1" fill="none" stroke="#fff" stroke-width="2" stroke-linecap="round" stroke-linejoin="round"/></svg>
<div class="t" style="left:1436px;top:595.79px;font-size:13px;color:#1b4273;width:110px;text-align:center;text-decoration:underline;">edit</div>
<div class="t" style="left:1546px;top:593.29px;font-size:13px;color:#1b4273;width:132px;text-align:center;text-decoration:underline;">add</div>
<div class="a" style="left:217px;top:623px;width:1655px;height:24px;background:#ebeaef"></div>
<div class="a" style="left:257px;top:623px;width:1px;height:24px;background:#d8d8de"></div>
<div class="a" style="left:367px;top:623px;width:1px;height:24px;background:#d8d8de"></div>
<div class="a" style="left:562px;top:623px;width:1px;height:24px;background:#d8d8de"></div>
<div class="a" style="left:672px;top:623px;width:1px;height:24px;background:#d8d8de"></div>
<div class="a" style="left:782px;top:623px;width:1px;height:24px;background:#d8d8de"></div>
<div class="a" style="left:870px;top:623px;width:1px;height:24px;background:#d8d8de"></div>
<div class="a" style="left:1064px;top:623px;width:1px;height:24px;background:#d8d8de"></div>
<div class="a" style="left:1152px;top:623px;width:1px;height:24px;background:#d8d8de"></div>
<div class="a" style="left:1347px;top:623px;width:1px;height:24px;background:#d8d8de"></div>
<div class="a" style="left:1435px;top:623px;width:1px;height:24px;background:#d8d8de"></div>
<div class="a" style="left:1545px;top:623px;width:1px;height:24px;background:#d8d8de"></div>
<div class="a" style="left:1677px;top:623px;width:1px;height:24px;background:#d8d8de"></div>
<div class="a" style="left:228.2px;top:626.7px;width:17.5px;height:17.5px;border:1px solid #8d8d8d;border-radius:3px;background:#fff"></div>
<div class="t" style="left:257px;top:627.79px;font-size:13px;color:#111;width:110px;text-align:center;">1-1110</div>
<div class="t" style="left:372.4px;top:627.79px;font-size:13px;color:#111;">Commission Bank Account</div>
<div class="t" style="left:567px;top:627.79px;font-size:13px;color:#111;">Asset</div>
<div class="t" style="left:677px;top:627.79px;font-size:13px;color:#111;">Checking</div>
<div class="a" style="left:817.2px;top:626.7px;width:17.5px;height:17.5px;border:1px solid #8d8d8d;border-radius:3px;background:#fff"></div>
<div class="t" style="left:876px;top:627.79px;font-size:13px;color:#111;">1-1000 - Current Assets</div>
<div class="a" style="left:1100px;top:626.7px;width:17.5px;height:17.5px;border:1px solid #8d8d8d;border-radius:3px;background:#fff"></div>
<div class="a" style="left:1383px;top:626.7px;width:17.5px;height:17.5px;border:1px solid #8d8d8d;border-radius:3px;background:#fff"></div>
<div class="t" style="left:1436px;top:627.79px;font-size:13px;color:#1b4273;width:110px;text-align:center;text-decoration:underline;">edit</div>
<div class="t" style="left:1546px;top:627.79px;font-size:13px;color:#1b4273;width:132px;text-align:center;text-decoration:underline;">add</div>
<div class="a" style="left:217px;top:647px;width:1655px;height:23px;background:#fff"></div>
<div class="a" style="left:257px;top:647px;width:1px;height:23px;background:#d8d8de"></div>
<div class="a" style="left:367px;top:647px;width:1px;height:23px;background:#d8d8de"></div>
<div class="a" style="left:562px;top:647px;width:1px;height:23px;background:#d8d8de"></div>
<div class="a" style="left:672px;top:647px;width:1px;height:23px;background:#d8d8de"></div>
<div class="a" style="left:782px;top:647px;width:1px;height:23px;background:#d8d8de"></div>
<div class="a" style="left:870px;top:647px;width:1px;height:23px;background:#d8d8de"></div>
<div class="a" style="left:1064px;top:647px;width:1px;height:23px;background:#d8d8de"></div>
<div class="a" style="left:1152px;top:647px;width:1px;height:23px;background:#d8d8de"></div>
<div class="a" style="left:1347px;top:647px;width:1px;height:23px;background:#d8d8de"></div>
<div class="a" style="left:1435px;top:647px;width:1px;height:23px;background:#d8d8de"></div>
<div class="a" style="left:1545px;top:647px;width:1px;height:23px;background:#d8d8de"></div>
<div class="a" style="left:1677px;top:647px;width:1px;height:23px;background:#d8d8de"></div>
<div class="a" style="left:228.2px;top:650.2px;width:17.5px;height:17.5px;border:1px solid #8d8d8d;border-radius:3px;background:#fff"></div>
<div class="t" style="left:257px;top:652.29px;font-size:13px;color:#111;width:110px;text-align:center;">1-1111R</div>
<div class="t" style="left:372.4px;top:652.29px;font-size:13px;color:#111;">Escrow Account Rehoboth</div>
<div class="t" style="left:567px;top:652.29px;font-size:13px;color:#111;">Asset</div>
<div class="t" style="left:677px;top:652.29px;font-size:13px;color:#111;">Checking</div>
<div class="a" style="left:817.2px;top:650.2px;width:17.5px;height:17.5px;border:1px solid #8d8d8d;border-radius:3px;background:#fff"></div>
<div class="t" style="left:876px;top:652.29px;font-size:13px;color:#111;">1-1000 - Current Assets</div>
<div class="a" style="left:1099.8px;top:650.0px;width:18.0px;height:18.0px;background:#1b4273;border-radius:2.5px"></div>
<svg class="a" style="left:1099.8px;top:650.0px;" width="18" height="18" viewBox="0 0 18 18"><path d="M3.3 8.3L6.9 11.9L14.5 4.1" fill="none" stroke="#fff" stroke-width="2" stroke-linecap="round" stroke-linejoin="round"/></svg>
<div class="t" style="left:1158px;top:652.29px;font-size:13px;color:#111;">2-7777 - Escrow Liability</div>
<div class="a" style="left:1383px;top:650.2px;width:17.5px;height:17.5px;border:1px solid #8d8d8d;border-radius:3px;background:#fff"></div>
<div class="t" style="left:1436px;top:652.29px;font-size:13px;color:#1b4273;width:110px;text-align:center;text-decoration:underline;">edit</div>
<div class="t" style="left:1546px;top:652.29px;font-size:13px;color:#1b4273;width:132px;text-align:center;text-decoration:underline;">add</div>
<div class="a" style="left:217px;top:670px;width:1655px;height:42px;background:#ebeaef"></div>
<div class="a" style="left:257px;top:670px;width:1px;height:42px;background:#d8d8de"></div>
<div class="a" style="left:367px;top:670px;width:1px;height:42px;background:#d8d8de"></div>
<div class="a" style="left:562px;top:670px;width:1px;height:42px;background:#d8d8de"></div>
<div class="a" style="left:672px;top:670px;width:1px;height:42px;background:#d8d8de"></div>
<div class="a" style="left:782px;top:670px;width:1px;height:42px;background:#d8d8de"></div>
<div class="a" style="left:870px;top:670px;width:1px;height:42px;background:#d8d8de"></div>
<div class="a" style="left:1064px;top:670px;width:1px;height:42px;background:#d8d8de"></div>
<div class="a" style="left:1152px;top:670px;width:1px;height:42px;background:#d8d8de"></div>
<div class="a" style="left:1347px;top:670px;width:1px;height:42px;background:#d8d8de"></div>
<div class="a" style="left:1435px;top:670px;width:1px;height:42px;background:#d8d8de"></div>
<div class="a" style="left:1545px;top:670px;width:1px;height:42px;background:#d8d8de"></div>
<div class="a" style="left:1677px;top:670px;width:1px;height:42px;background:#d8d8de"></div>
<div class="a" style="left:228.2px;top:682.7px;width:17.5px;height:17.5px;border:1px solid #8d8d8d;border-radius:3px;background:#fff"></div>
<div class="t" style="left:257px;top:684.79px;font-size:13px;color:#111;width:110px;text-align:center;">1-1111W</div>
<div class="t" style="left:372.4px;top:675.29px;font-size:13px;color:#111;">CLOSED Escrow Account</div>
<div class="t" style="left:372.4px;top:694.29px;font-size:13px;color:#111;">Wilmington</div>
<div class="t" style="left:567px;top:684.79px;font-size:13px;color:#111;">Asset</div>
<div class="t" style="left:677px;top:684.79px;font-size:13px;color:#111;">Checking</div>
<div class="a" style="left:817.2px;top:682.7px;width:17.5px;height:17.5px;border:1px solid #8d8d8d;border-radius:3px;background:#fff"></div>
<div class="t" style="left:876px;top:684.79px;font-size:13px;color:#111;">1-1000 - Current Assets</div>
<div class="a" style="left:1099.8px;top:682.5px;width:18.0px;height:18.0px;background:#1b4273;border-radius:2.5px"></div>
<svg class="a" style="left:1099.8px;top:682.5px;" width="18" height="18" viewBox="0 0 18 18"><path d="M3.3 8.3L6.9 11.9L14.5 4.1" fill="none" stroke="#fff" stroke-width="2" stroke-linecap="round" stroke-linejoin="round"/></svg>
<div class="t" style="left:1158px;top:684.79px;font-size:13px;color:#111;">2-7777 - Escrow Liability</div>
<div class="a" style="left:1383px;top:682.7px;width:17.5px;height:17.5px;border:1px solid #8d8d8d;border-radius:3px;background:#fff"></div>
<div class="t" style="left:1436px;top:684.79px;font-size:13px;color:#1b4273;width:110px;text-align:center;text-decoration:underline;">edit</div>
<div class="t" style="left:1546px;top:684.79px;font-size:13px;color:#1b4273;width:132px;text-align:center;text-decoration:underline;">add</div>
<div class="a" style="left:217px;top:712px;width:1655px;height:24px;background:#fff"></div>
<div class="a" style="left:257px;top:712px;width:1px;height:24px;background:#d8d8de"></div>
<div class="a" style="left:367px;top:712px;width:1px;height:24px;background:#d8d8de"></div>
<div class="a" style="left:562px;top:712px;width:1px;height:24px;background:#d8d8de"></div>
<div class="a" style="left:672px;top:712px;width:1px;height:24px;background:#d8d8de"></div>
<div class="a" style="left:782px;top:712px;width:1px;height:24px;background:#d8d8de"></div>
<div class="a" style="left:870px;top:712px;width:1px;height:24px;background:#d8d8de"></div>
<div class="a" style="left:1064px;top:712px;width:1px;height:24px;background:#d8d8de"></div>
<div class="a" style="left:1152px;top:712px;width:1px;height:24px;background:#d8d8de"></div>
<div class="a" style="left:1347px;top:712px;width:1px;height:24px;background:#d8d8de"></div>
<div class="a" style="left:1435px;top:712px;width:1px;height:24px;background:#d8d8de"></div>
<div class="a" style="left:1545px;top:712px;width:1px;height:24px;background:#d8d8de"></div>
<div class="a" style="left:1677px;top:712px;width:1px;height:24px;background:#d8d8de"></div>
<div class="a" style="left:228.2px;top:715.7px;width:17.5px;height:17.5px;border:1px solid #8d8d8d;border-radius:3px;background:#fff"></div>
<div class="t" style="left:257px;top:717.79px;font-size:13px;color:#111;width:110px;text-align:center;">1-1112</div>
<div class="t" style="left:372.4px;top:717.79px;font-size:13px;color:#111;">Property Management Account</div>
<div class="t" style="left:567px;top:717.79px;font-size:13px;color:#111;">Asset</div>
<div class="t" style="left:677px;top:717.79px;font-size:13px;color:#111;">Checking</div>
<div class="a" style="left:817.2px;top:715.7px;width:17.5px;height:17.5px;border:1px solid #8d8d8d;border-radius:3px;background:#fff"></div>
<div class="t" style="left:876px;top:717.79px;font-size:13px;color:#111;">1-1000 - Current Assets</div>
<div class="a" style="left:1100px;top:715.7px;width:17.5px;height:17.5px;border:1px solid #8d8d8d;border-radius:3px;background:#fff"></div>
<div class="a" style="left:1383px;top:715.7px;width:17.5px;height:17.5px;border:1px solid #8d8d8d;border-radius:3px;background:#fff"></div>
<div class="t" style="left:1436px;top:717.79px;font-size:13px;color:#1b4273;width:110px;text-align:center;text-decoration:underline;">edit</div>
<div class="t" style="left:1546px;top:717.79px;font-size:13px;color:#1b4273;width:132px;text-align:center;text-decoration:underline;">add</div>
<div class="a" style="left:217px;top:736px;width:1655px;height:24px;background:#ebeaef"></div>
<div class="a" style="left:257px;top:736px;width:1px;height:24px;background:#d8d8de"></div>
<div class="a" style="left:367px;top:736px;width:1px;height:24px;background:#d8d8de"></div>
<div class="a" style="left:562px;top:736px;width:1px;height:24px;background:#d8d8de"></div>
<div class="a" style="left:672px;top:736px;width:1px;height:24px;background:#d8d8de"></div>
<div class="a" style="left:782px;top:736px;width:1px;height:24px;background:#d8d8de"></div>
<div class="a" style="left:870px;top:736px;width:1px;height:24px;background:#d8d8de"></div>
<div class="a" style="left:1064px;top:736px;width:1px;height:24px;background:#d8d8de"></div>
<div class="a" style="left:1152px;top:736px;width:1px;height:24px;background:#d8d8de"></div>
<div class="a" style="left:1347px;top:736px;width:1px;height:24px;background:#d8d8de"></div>
<div class="a" style="left:1435px;top:736px;width:1px;height:24px;background:#d8d8de"></div>
<div class="a" style="left:1545px;top:736px;width:1px;height:24px;background:#d8d8de"></div>
<div class="a" style="left:1677px;top:736px;width:1px;height:24px;background:#d8d8de"></div>
<div class="a" style="left:228.2px;top:739.7px;width:17.5px;height:17.5px;border:1px solid #8d8d8d;border-radius:3px;background:#fff"></div>
<div class="t" style="left:257px;top:741.79px;font-size:13px;color:#111;width:110px;text-align:center;">1-1120</div>
<div class="t" style="left:372.4px;top:741.79px;font-size:13px;color:#111;">Money Market</div>
<div class="t" style="left:567px;top:741.79px;font-size:13px;color:#111;">Asset</div>
<div class="t" style="left:677px;top:741.79px;font-size:13px;color:#111;">Checking</div>
<div class="a" style="left:817.2px;top:739.7px;width:17.5px;height:17.5px;border:1px solid #8d8d8d;border-radius:3px;background:#fff"></div>
<div class="t" style="left:876px;top:741.79px;font-size:13px;color:#111;">1-1000 - Current Assets</div>
<div class="a" style="left:1100px;top:739.7px;width:17.5px;height:17.5px;border:1px solid #8d8d8d;border-radius:3px;background:#fff"></div>
<div class="a" style="left:1383px;top:739.7px;width:17.5px;height:17.5px;border:1px solid #8d8d8d;border-radius:3px;background:#fff"></div>
<div class="t" style="left:1436px;top:741.79px;font-size:13px;color:#1b4273;width:110px;text-align:center;text-decoration:underline;">edit</div>
<div class="t" style="left:1546px;top:741.79px;font-size:13px;color:#1b4273;width:132px;text-align:center;text-decoration:underline;">add</div>
<div class="a" style="left:217px;top:760px;width:1655px;height:24px;background:#fff"></div>
<div class="a" style="left:257px;top:760px;width:1px;height:24px;background:#d8d8de"></div>
<div class="a" style="left:367px;top:760px;width:1px;height:24px;background:#d8d8de"></div>
<div class="a" style="left:562px;top:760px;width:1px;height:24px;background:#d8d8de"></div>
<div class="a" style="left:672px;top:760px;width:1px;height:24px;background:#d8d8de"></div>
<div class="a" style="left:782px;top:760px;width:1px;height:24px;background:#d8d8de"></div>
<div class="a" style="left:870px;top:760px;width:1px;height:24px;background:#d8d8de"></div>
<div class="a" style="left:1064px;top:760px;width:1px;height:24px;background:#d8d8de"></div>
<div class="a" style="left:1152px;top:760px;width:1px;height:24px;background:#d8d8de"></div>
<div class="a" style="left:1347px;top:760px;width:1px;height:24px;background:#d8d8de"></div>
<div class="a" style="left:1435px;top:760px;width:1px;height:24px;background:#d8d8de"></div>
<div class="a" style="left:1545px;top:760px;width:1px;height:24px;background:#d8d8de"></div>
<div class="a" style="left:1677px;top:760px;width:1px;height:24px;background:#d8d8de"></div>
<div class="a" style="left:228.2px;top:763.7px;width:17.5px;height:17.5px;border:1px solid #8d8d8d;border-radius:3px;background:#fff"></div>
<div class="t" style="left:257px;top:765.79px;font-size:13px;color:#111;width:110px;text-align:center;">1-1125</div>
<div class="t" style="left:372.4px;top:765.79px;font-size:13px;color:#111;">Payroll Checking Account</div>
<div class="t" style="left:567px;top:765.79px;font-size:13px;color:#111;">Asset</div>
<div class="t" style="left:677px;top:765.79px;font-size:13px;color:#111;">Checking</div>
<div class="a" style="left:817.2px;top:763.7px;width:17.5px;height:17.5px;border:1px solid #8d8d8d;border-radius:3px;background:#fff"></div>
<div class="t" style="left:876px;top:765.79px;font-size:13px;color:#111;">1-1000 - Current Assets</div>
<div class="a" style="left:1100px;top:763.7px;width:17.5px;height:17.5px;border:1px solid #8d8d8d;border-radius:3px;background:#fff"></div>
<div class="a" style="left:1383px;top:763.7px;width:17.5px;height:17.5px;border:1px solid #8d8d8d;border-radius:3px;background:#fff"></div>
<div class="t" style="left:1436px;top:765.79px;font-size:13px;color:#1b4273;width:110px;text-align:center;text-decoration:underline;">edit</div>
<div class="t" style="left:1546px;top:765.79px;font-size:13px;color:#1b4273;width:132px;text-align:center;text-decoration:underline;">add</div>
<div class="a" style="left:1872px;top:473px;width:15px;height:491px;background:#fbfbfb"></div>
<svg class="a" style="left:1875px;top:477px;" width="9" height="6.5" viewBox="0 0 9 6.5"><path d="M4.5 0.8L8.2 5.7H0.8Z" fill="#888" stroke="#888" stroke-width="1.3" stroke-linejoin="round"/></svg>
<svg class="a" style="left:1875px;top:953px;" width="9" height="6.5" viewBox="0 0 9 6.5"><path d="M0.8 0.8H8.2L4.5 5.7Z" fill="#888" stroke="#888" stroke-width="1.3" stroke-linejoin="round"/></svg>
<div class="a" style="left:376.5px;top:82.0px;width:28.4px;height:28.6px;background:#000;border-radius:50%"></div>
<svg class="a" style="left:386.7px;top:89.8px;" width="5" height="12.3" viewBox="0 0 5 12.3"><path d="M1.9 0H4.3V12.3H1.9V2.1L0 2.1V1Z" fill="#fff"/></svg>
<div class="a" style="left:38.8px;top:196.2px;width:28.4px;height:28.6px;background:#000;border-radius:50%"></div>
<div class="t" style="left:38.5px;top:201.61px;font-size:17px;color:#fff;width:29px;text-align:center;">2</div>
<div class="a" style="left:613.0px;top:306.2px;width:28.4px;height:28.6px;background:#000;border-radius:50%"></div>
<div class="t" style="left:612.7px;top:311.61px;font-size:17px;color:#fff;width:29px;text-align:center;">3</div>
<div class="a" style="left:1517.8px;top:588.9px;width:28.4px;height:28.6px;background:#000;border-radius:50%"></div>
<div class="t" style="left:1517.5px;top:594.31px;font-size:17px;color:#fff;width:29px;text-align:center;">4</div>
<div class="a" style="left:0px;top:0px;width:1928px;height:4px;background:#000"></div>
<div class="a" style="left:0px;top:0px;width:4px;height:1007px;background:#000"></div>
<div class="a" style="left:1924px;top:0px;width:4px;height:1007px;background:#000"></div>
<div class="a" style="left:0px;top:1003px;width:1928px;height:4px;background:#000"></div>
<div class="a" style="left:4px;top:1002px;width:1920px;height:1px;background:#1b3f6e"></div>
</body></html>
